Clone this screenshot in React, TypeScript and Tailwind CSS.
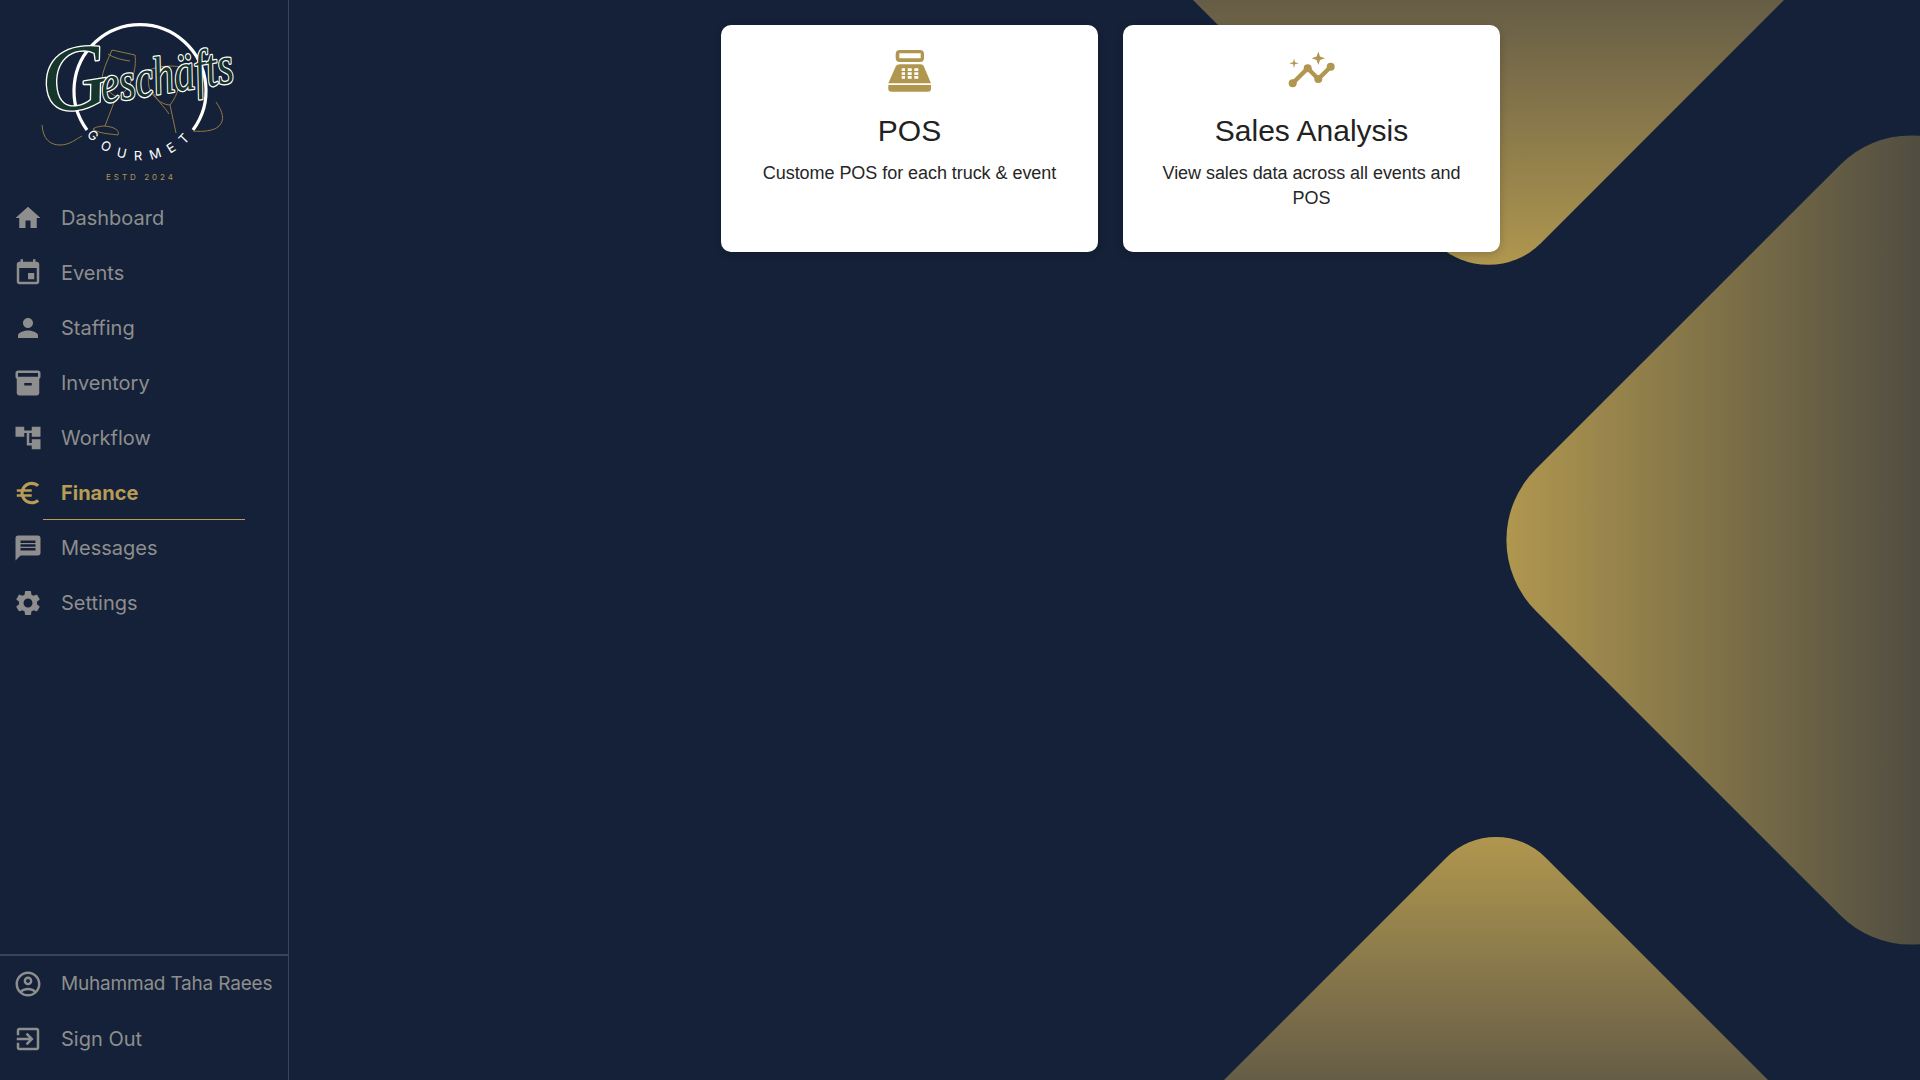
import type { ReactNode } from "react";

const muiIcons: Record<string, string> = {
  home: "M10 20v-6h4v6h5v-8h3L12 3 2 12h3v8z",
  event: "M17 12h-5v5h5v-5zM16 1v2H8V1H6v2H5c-1.11 0-1.99.9-1.99 2L3 19c0 1.1.89 2 2 2h14c1.1 0 2-.9 2-2V5c0-1.1-.9-2-2-2h-1V1h-2zm3 18H5V8h14v11z",
  person: "M12 12c2.21 0 4-1.79 4-4s-1.79-4-4-4-4 1.79-4 4 1.79 4 4 4zm0 2c-2.67 0-8 1.34-8 4v2h16v-2c0-2.66-5.33-4-8-4z",
  inventory: "M20 2H4c-1 0-2 .9-2 2v3.01c0 .72.43 1.34 1 1.69V20c0 1.1 1.1 2 2 2h14c.9 0 2-.9 2-2V8.7c.57-.35 1-.97 1-1.69V4c0-1.1-1-2-2-2zm-5 12H9v-2h6v2zm5-7H4V4l16-.02V7z",
  workflow: "M22 11V3h-7v3H9V3H2v8h7V8h2v10h4v3h7v-8h-7v3h-2V8h2v3z",
  euro: "M15 18.5c-2.51 0-4.68-1.42-5.76-3.5H15v-2H8.58c-.05-.33-.08-.66-.08-1s.03-.67.08-1H15V9H9.24C10.32 6.92 12.5 5.5 15 5.5c1.61 0 3.09.59 4.23 1.57L21 5.3C19.41 3.87 17.3 3 15 3c-3.92 0-7.24 2.51-8.48 6H3v2h3.06c-.04.33-.06.66-.06 1s.02.67.06 1H3v2h3.52c1.24 3.49 4.56 6 8.48 6 2.31 0 4.41-.87 6-2.3l-1.78-1.77c-1.13.98-2.6 1.57-4.2 1.57z",
  message: "M20 2H4c-1.1 0-1.99.9-1.99 2L2 22l4-4h14c1.1 0 2-.9 2-2V4c0-1.1-.9-2-2-2zm-2 12H6v-2h12v2zm0-3H6V9h12v2zm0-3H6V6h12v2z",
  settings: "M19.14 12.94c.04-.3.06-.61.06-.94 0-.32-.02-.64-.07-.94l2.03-1.58c.18-.14.23-.41.12-.61l-1.92-3.32c-.12-.22-.37-.29-.59-.22l-2.39.96c-.5-.38-1.03-.7-1.62-.94l-.36-2.54c-.04-.24-.24-.41-.48-.41h-3.84c-.24 0-.43.17-.47.41l-.36 2.54c-.59.24-1.13.57-1.62.94l-2.39-.96c-.22-.08-.47 0-.59.22L2.74 8.87c-.12.21-.08.47.12.61l2.03 1.58c-.05.3-.09.63-.09.94s.02.64.07.94l-2.03 1.58c-.18.14-.23.41-.12.61l1.92 3.32c.12.22.37.29.59.22l2.39-.96c.5.38 1.03.7 1.62.94l.36 2.54c.05.24.24.41.48.41h3.84c.24 0 .44-.17.47-.41l.36-2.54c.59-.24 1.13-.56 1.62-.94l2.39.96c.22.08.47 0 .59-.22l1.92-3.32c.12-.22.07-.47-.12-.61l-2.01-1.58zM12 15.6c-1.98 0-3.6-1.62-3.6-3.6s1.62-3.6 3.6-3.6 3.6 1.62 3.6 3.6-1.62 3.6-3.6 3.6z",
  account: "M12 2C6.48 2 2 6.48 2 12s4.48 10 10 10 10-4.48 10-10S17.52 2 12 2zM7.35 18.5C8.66 17.56 10.26 17 12 17s3.34.56 4.65 1.5c-1.31.94-2.91 1.5-4.65 1.5s-3.34-.56-4.65-1.5zm10.79-1.38C16.45 15.8 14.32 15 12 15s-4.45.8-6.14 2.12C4.7 15.73 4 13.95 4 12c0-4.42 3.58-8 8-8s8 3.58 8 8c0 1.95-.7 3.73-1.86 5.12zM12 6c-1.93 0-3.5 1.57-3.5 3.5S10.07 13 12 13s3.5-1.57 3.5-3.5S13.93 6 12 6zm0 5c-.83 0-1.5-.67-1.5-1.5S11.17 8 12 8s1.5.67 1.5 1.5S12.83 11 12 11z",
  signout: "M10.09 15.59L11.5 17l5-5-5-5-1.41 1.41L12.67 11H3v2h9.67l-2.58 2.59zM19 3H5c-1.11 0-2 .9-2 2v4h2V5h14v14H5v-4H3v4c0 1.1.89 2 2 2h14c1.1 0 2-.9 2-2V5c0-1.1-.9-2-2-2z",
};

const navItems = [
  { label: "Dashboard", icon: "home" },
  { label: "Events", icon: "event" },
  { label: "Staffing", icon: "person" },
  { label: "Inventory", icon: "inventory" },
  { label: "Workflow", icon: "workflow" },
  { label: "Finance", icon: "euro", active: true },
  { label: "Messages", icon: "message" },
  { label: "Settings", icon: "settings" },
];

function NavRow({ label, icon, active, narrow }: { label: string; icon: string; active?: boolean; narrow?: boolean }) {
  return (
    <div className={`relative flex h-[55px] items-center gap-[18px] pl-[13px] ${active ? "font-bold text-[#b89b54]" : "text-[#8e8e8e]"}`}>
      <svg viewBox="0 0 24 24" className="h-[30px] w-[30px] shrink-0 fill-current">
        <path d={muiIcons[icon]} />
      </svg>
      <span className={`whitespace-nowrap leading-none ${narrow ? "text-[19px] tracking-[-0.2px]" : "text-[20px]"}`}>{label}</span>
      {active && <span className="absolute bottom-0 left-[43px] h-px w-[202px] bg-[#b89b54]" />}
    </div>
  );
}

function Logo() {
  const gold = "#927a42";
  return (
    <svg viewBox="0 0 289 190" className="h-[190px] w-[289px] shrink-0">
      <path d="M87 130 A66 66 0 1 1 193 130" fill="none" stroke="#fff" strokeWidth="3.2" />
      <g fill="none" stroke={gold} strokeWidth="1">
        <path d="M42 125c1 14 8 20 18 20s16-6 22-9" />
        <path d="M112 50l23 5c2 14-4 36-18 42-10-5-17-14-14-24 2-8 6-16 9-23zM116 97l-11 29c-4 0-10 1-12 3 6 5 20 5 25 6 2-5-4-8-13-9M108 54c6 4 14 6 22 7" />
        <path d="M149 70c10-4 22-5 31-3 2 14-2 28-10 38-8 0-18-8-21-18-1-6-1-12 0-17zM170 105l6 28M152 90c4 10 12 16 17 24" />
        <path d="M193 131c10 1 21 0 26-5 6-6 4-14-3-24" />
      </g>
      <g fill="#fff" fontFamily="Inter, sans-serif" fontSize="13">
        <path id="gourmet-arc" d="M74.7 114.5 A69.5 69.5 0 0 0 205.3 114.5" fill="none" />
        <text letterSpacing="8.5" textAnchor="middle">
          <textPath href="#gourmet-arc" startOffset="51%">GOURMET</textPath>
        </text>
      </g>
      <text x="141" y="180" textAnchor="middle" fontFamily="Inter, sans-serif" fontSize="8" letterSpacing="3" fill="#b0964f">
        ESTD 2024
      </text>
      <g transform="rotate(-9 140 80)" fontFamily="'Liberation Serif', serif" fontStyle="italic" fill="#16352b" stroke="#fff" strokeWidth="2.6" paintOrder="stroke" strokeLinejoin="round">
        <text x="42" y="99" fontSize="92">G</text>
        <text x="100" y="97" fontSize="54" textLength="134" lengthAdjust="spacingAndGlyphs">eschäfts</text>
      </g>
    </svg>
  );
}

function Card({ icon, title, children }: { icon: ReactNode; title: string; children: ReactNode }) {
  return (
    <div className="flex h-[227px] w-[377px] flex-col items-center rounded-[10px] bg-white px-6 pt-[25px] text-center font-['Liberation_Sans',sans-serif] shadow-[0_2px_8px_rgba(0,0,0,0.2)]">
      <div className="flex h-[42px] items-center justify-center">{icon}</div>
      <h2 className="mt-[21px] text-[30px] leading-9 font-normal text-[#222222]">{title}</h2>
      <p className="mt-3 text-[18px] leading-[25px] tracking-[-0.05px] text-[#262626]">{children}</p>
    </div>
  );
}

function PosIcon() {
  return (
    <svg viewBox="0 0 44 42" className="ml-px h-[42px] w-[44px] fill-[#b0964f]">
      <path fillRule="evenodd" d="M11.7 0H32a4 4 0 0 1 4 4v4a4 4 0 0 1-4 4H11.7a4 4 0 0 1-4-4V4a4 4 0 0 1 4-4zM11.3 3.3v5h21.4v-5z" />
      <path d="M12 14.3h20.5c1.6 0 2.8.8 3.4 2.2L43 33.3H.3l7.4-16.8c.7-1.4 2.5-2.2 4.3-2.2z" />
      <path d="M.3 35H43v3.5a3.2 3.2 0 0 1-3.2 3.2H3.5A3.2 3.2 0 0 1 .3 38.5z" />
      <path fill="#fff" d="M13.7 18.3H17V21h-3.3zM19.7 18.3h4V21h-4zM26.3 18.3h4V21h-4zM13.7 22.3H17V25h-3.3zM19.7 22.3h4V25h-4zM26.3 22.3h4V25h-4zM13.7 26H17v2.7h-3.3zM19.7 26h4v2.7h-4zM26.3 26h4v2.7h-4z" />
    </svg>
  );
}

function SalesIcon() {
  return (
    <svg viewBox="0 0 48 42" className="h-[42px] w-[48px] fill-[#b0964f]">
      <path d="M4.7 33.3L19.7 18.3L30.3 29L42.7 16.7" fill="none" stroke="#b0964f" strokeWidth="4.4" />
      <circle cx="4.7" cy="33.3" r="4" />
      <circle cx="19.7" cy="18.3" r="4" />
      <circle cx="30.3" cy="29" r="4" />
      <circle cx="42.7" cy="16.7" r="4" />
      <path d="M30.3 1.5l1.7 5 5 1.8-5 1.8-1.7 5-1.7-5-5-1.8 5-1.8z" />
      <path d="M6 8.3l.9 4 4 1-4 1-.9 4-.9-4-4-1 4-1z" />
    </svg>
  );
}

export default function App() {
  return (
    <div className="relative flex h-screen w-full overflow-hidden bg-[#142138] font-['Inter',sans-serif]">
      {/* background shapes */}
      <svg viewBox="0 0 1920 1080" className="absolute inset-0 h-full w-full">
        <defs>
          <linearGradient id="shape-right" gradientUnits="userSpaceOnUse" x1="1507" y1="0" x2="1920" y2="0">
            <stop offset="0" stopColor="#b0974f" />
            <stop offset="1" stopColor="#504d41" />
          </linearGradient>
          <linearGradient id="shape-top" gradientUnits="userSpaceOnUse" x1="0" y1="265" x2="0" y2="0">
            <stop offset="0" stopColor="#b0974f" />
            <stop offset="1" stopColor="#665d46" />
          </linearGradient>
          <linearGradient id="shape-bottom" gradientUnits="userSpaceOnUse" x1="0" y1="837" x2="0" y2="1080">
            <stop offset="0" stopColor="#b0974f" />
            <stop offset="1" stopColor="#665d46" />
          </linearGradient>
        </defs>
        <path fill="url(#shape-top)" d="M1193 0L1436.2 243.2A74 74 0 0 0 1540.8 243.2L1784 0Z" />
        <path fill="url(#shape-right)" d="M1981.7 164.7A100 100 0 0 0 1840.3 164.7L1535.7 469.3A100 100 0 0 0 1535.7 610.7L1840.3 915.3A100 100 0 0 0 1981.7 915.3Z" />
        <path fill="url(#shape-bottom)" d="M1224 1080L1446.5 857.5A70 70 0 0 1 1545.5 857.5L1768 1080Z" />
      </svg>

      <aside className="relative flex h-full w-[289px] shrink-0 flex-col border-r border-[#3a4358]">
        <Logo />
        <nav className="flex flex-col">
          {navItems.map((item) => (
            <NavRow key={item.label} {...item} />
          ))}
        </nav>
        <div className="mt-auto border-t-2 border-[#3a4358] pb-[14px]">
          <NavRow label="Muhammad Taha Raees" icon="account" narrow />
          <NavRow label="Sign Out" icon="signout" />
        </div>
      </aside>

      <main className="relative flex flex-1 justify-center gap-[25px] pt-[25px] pl-3">
        <Card icon={<PosIcon />} title="POS">
          Custome POS for each truck &amp; event
        </Card>
        <Card icon={<SalesIcon />} title="Sales Analysis">
          View sales data across all events and POS
        </Card>
      </main>
    </div>
  );
}
